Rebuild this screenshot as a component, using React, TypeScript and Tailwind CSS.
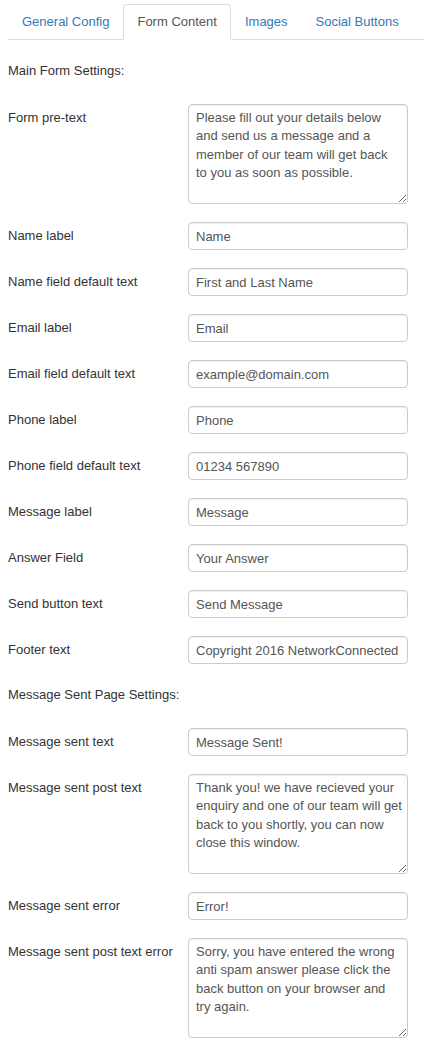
import React from "react";

const font = { fontFamily: '"Liberation Sans", Arial, sans-serif' };

type Row = { label: string; value: string; area?: boolean };

const main: Row[] = [
  { label: "Form pre-text", value: "Please fill out your details below\nand send us a message and a\nmember of our team will get back\nto you as soon as possible.", area: true },
  { label: "Name label", value: "Name" },
  { label: "Name field default text", value: "First and Last Name" },
  { label: "Email label", value: "Email" },
  { label: "Email field default text", value: "example@domain.com" },
  { label: "Phone label", value: "Phone" },
  { label: "Phone field default text", value: "01234 567890" },
  { label: "Message label", value: "Message" },
  { label: "Answer Field", value: "Your Answer" },
  { label: "Send button text", value: "Send Message" },
  { label: "Footer text", value: "Copyright 2016 NetworkConnected" },
];

const sent: Row[] = [
  { label: "Message sent text", value: "Message Sent!" },
  { label: "Message sent post text", value: "Thank you! we have recieved your\nenquiry and one of our team will get\nback to you shortly, you can now\nclose this window.", area: true },
  { label: "Message sent error", value: "Error!" },
  { label: "Message sent post text error", value: "Sorry, you have entered the wrong\nanti spam answer please click the\nback button on your browser and\ntry again.", area: true },
];

function FieldRow({ r }: { r: Row }) {
  return (
    <div className="flex mb-[18px]">
      <div className="w-[180px] shrink-0 pt-[5px] text-[13px] leading-[18px] text-[#333]">{r.label}</div>
      {r.area ? (
        <textarea
          readOnly
          defaultValue={r.value}
          style={font}
          className="w-[220px] h-[100px] shrink-0 border border-[#ccc] rounded-[4px] pl-[7px] pr-[2px] pt-[4px] text-[13px] leading-[18.4px] text-[#555] shadow-[inset_0_1px_1px_rgba(0,0,0,0.075)] outline-none overflow-hidden whitespace-pre"
        />
      ) : (
        <input
          readOnly
          defaultValue={r.value}
          style={font}
          className="w-[220px] h-[28px] shrink-0 border border-[#ccc] rounded-[4px] px-[7px] text-[13px] text-[#555] shadow-[inset_0_1px_1px_rgba(0,0,0,0.075)] outline-none"
        />
      )}
    </div>
  );
}

export default function App() {
  const tabs = ["General Config", "Form Content", "Images", "Social Buttons"];
  return (
    <div className="bg-white w-[424px] min-h-[1049px] overflow-hidden" style={font}>
      <div className="pl-[8px] pt-[4px]">
        <div className="flex border-b border-[#ddd]">
          {tabs.map((t, i) => (
            <div
              key={t}
              className={
                i === 1
                  ? "-mb-px px-[13px] py-[8px] text-[13px] leading-[18px] text-[#555] bg-white border border-[#ddd] border-b-white rounded-t-[4px]"
                  : "-mb-px px-[13px] py-[8px] text-[13px] leading-[18px] text-[#337ab7] border border-transparent rounded-t-[4px]"
              }
            >
              {t}
            </div>
          ))}
        </div>
      </div>
      <div className="pl-[8px] pt-[22px]">
        <div className="text-[13px] leading-[18px] text-[#333] mb-[24px]">Main Form Settings:</div>
        {main.map((r) => (
          <FieldRow key={r.label} r={r} />
        ))}
        <div className="text-[13px] leading-[18px] text-[#333] mt-[22px] mb-[24px]">
          Message Sent Page Settings:
        </div>
        {sent.map((r) => (
          <FieldRow key={r.label} r={r} />
        ))}
      </div>
    </div>
  );
}
